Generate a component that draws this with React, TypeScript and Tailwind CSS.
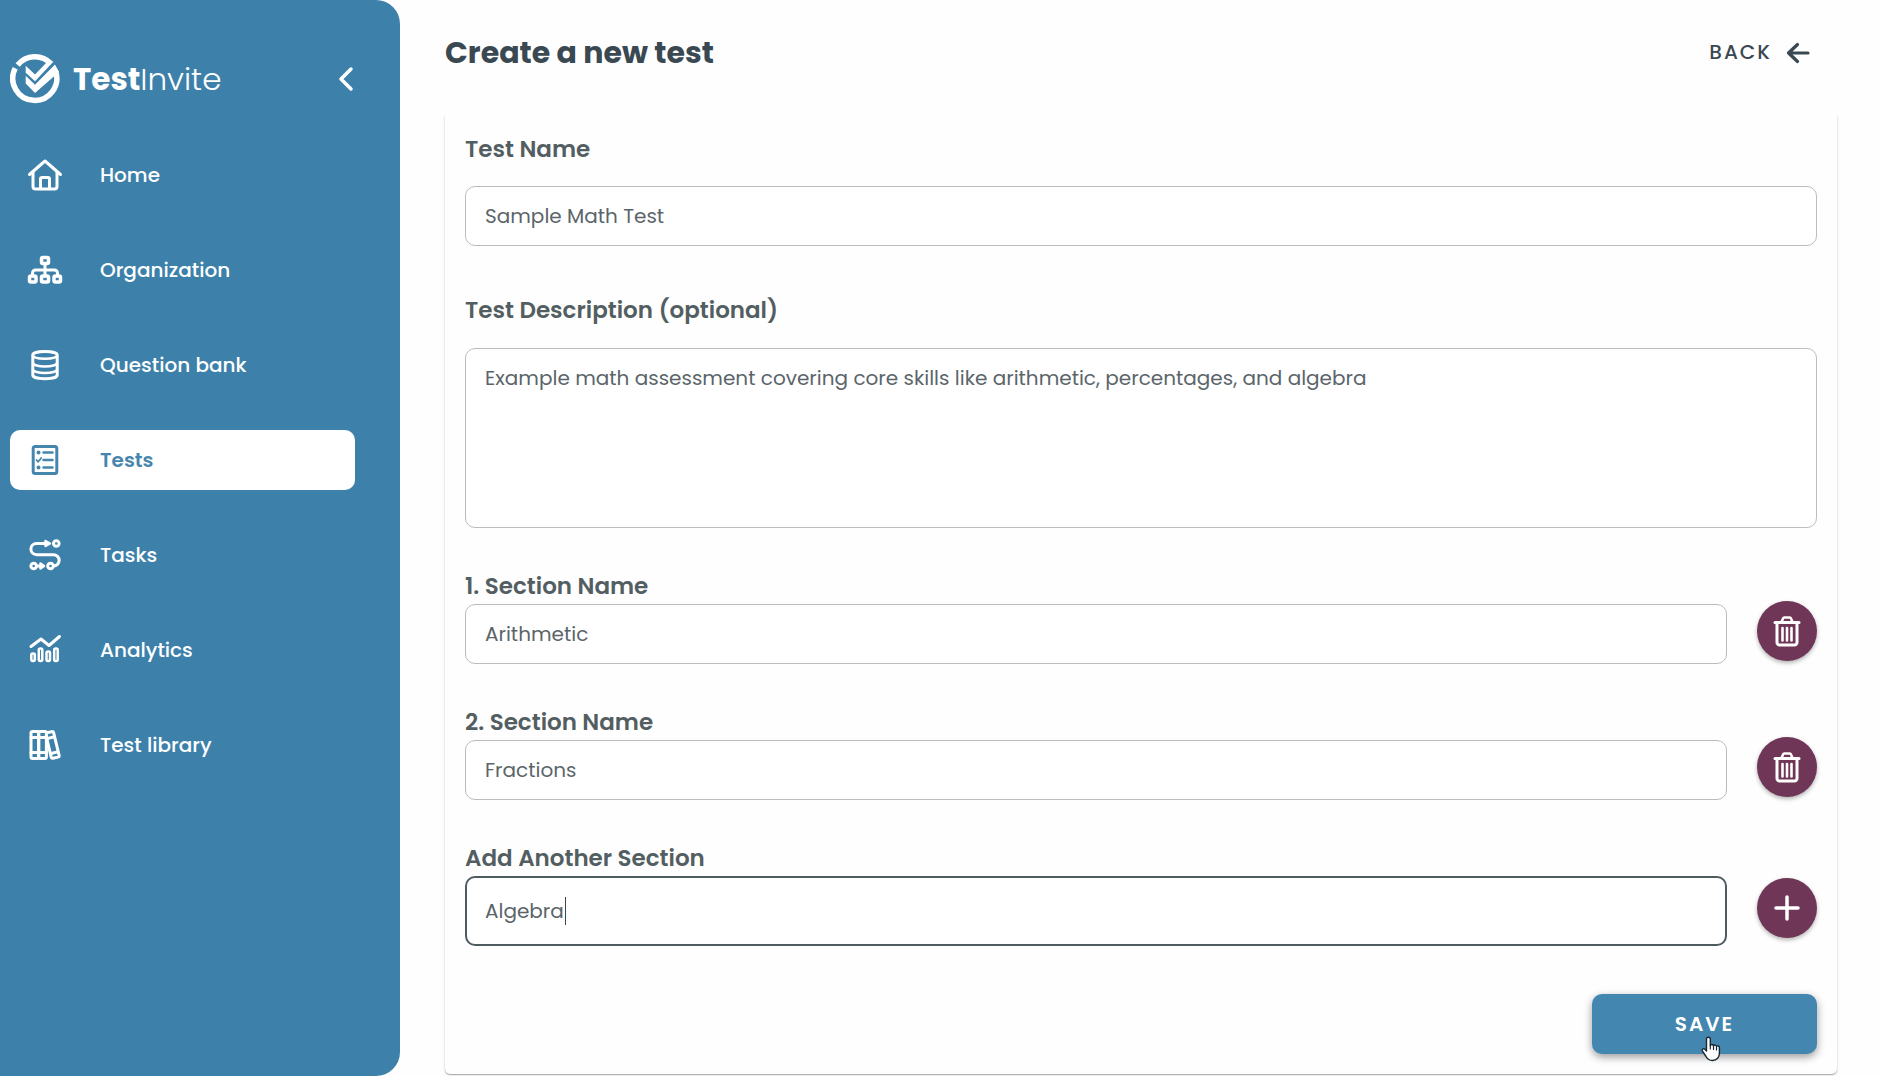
import React, { useState } from "react";

interface NavItem {
  id: string;
  title: string;
  icon: React.ReactNode;
}

interface IconProps {
  children: React.ReactNode;
}

const NavIcon: React.FC<IconProps> = ({ children }) => (
  <svg
    width="36"
    height="36"
    viewBox="0 0 36 36"
    fill="none"
    stroke="currentColor"
    strokeWidth="3"
    strokeLinecap="round"
    strokeLinejoin="round"
    aria-hidden="true"
  >
    {children}
  </svg>
);

const navItems: NavItem[] = [
  {
    id: "home",
    title: "Home",
    icon: (
      <NavIcon>
        <path d="M2.500 17.500 18 4l15.500 13.500" />
        <path d="M6 15v14.500a2.500 2.500 0 0 0 2.500 2.500h19a2.500 2.500 0 0 0 2.500-2.500V15" />
        <path d="M13.500 31.500V22a1.500 1.500 0 0 1 1.500-1.500h6a1.500 1.500 0 0 1 1.500 1.500v9.500" />
      </NavIcon>
    ),
  },
  {
    id: "organization",
    title: "Organization",
    icon: (
      <NavIcon>
        <g strokeWidth="3.500">
          <rect x="14.500" y="5.500" width="7" height="6" rx="1.500" />
          <rect x="2.500" y="24" width="6.500" height="6" rx="1.500" />
          <rect x="14.500" y="24" width="7" height="6" rx="1.500" />
          <rect x="27" y="24" width="6.500" height="6" rx="1.500" />
        </g>
        <path d="M18 11.500V24M5.500 24v-3a3 3 0 0 1 3-3h19a3 3 0 0 1 3 3v3" />
      </NavIcon>
    ),
  },
  {
    id: "bank",
    title: "Question bank",
    icon: (
      <NavIcon>
        <path d="M5.800 8c0-2 5-3.500 12.200-3.500S30.200 6 30.200 8v20c0 2-5 3.700-12.200 3.700S5.800 30 5.800 28z" />
        <path d="M6 8.500c0 2 5.400 3.200 12 3.200s12-1.200 12-3.200" strokeWidth="2.500" />
        <path d="M6 16c0 2 5.400 3.600 12 3.600s12-1.600 12-3.600M6 22.500c0 2 5.400 3.600 12 3.600s12-1.600 12-3.600" strokeWidth="2.500" />
      </NavIcon>
    ),
  },
  {
    id: "tests",
    title: "Tests",
    icon: (
      <NavIcon>
        <rect x="6.200" y="4.500" width="23.600" height="27" rx="2" />
        <path strokeWidth="2.500" d="M16.500 10.500h9M16.500 18h9M16.500 25.500h9" />
        <path strokeWidth="1.800" d="m9.500 18 1.700 1.800 3-3.800" />
        <circle cx="11.500" cy="10.500" r="2" fill="currentColor" stroke="none" />
        <circle cx="11.500" cy="25.500" r="2" fill="currentColor" stroke="none" />
      </NavIcon>
    ),
  },
  {
    id: "tasks",
    title: "Tasks",
    icon: (
      <NavIcon>
        <circle cx="29.300" cy="6.500" r="2.800" />
        <circle cx="6.700" cy="29" r="2.800" />
        <circle cx="23.500" cy="29" r="2.800" />
        <path d="M20 6.500H9.500a5.600 5.600 0 0 0 0 11.200h17a5.600 5.600 0 0 1 0 11.300M10 29h5" />
        <path strokeWidth="2.500" fill="currentColor" d="m18.500 4 4.500 2.500-4.500 2.500zM13.500 26.500l3.500 2.500-3.500 2.500z" />
      </NavIcon>
    ),
  },
  {
    id: "analytics",
    title: "Analytics",
    icon: (
      <NavIcon>
        <path d="m4 14.500 10-7.500 8 6.500L32.500 4.500" />
        <g strokeWidth="2.500">
          <rect x="4.300" y="21.500" width="3.500" height="7.500" rx="1.500" />
          <rect x="11.800" y="16.500" width="3.500" height="12.500" rx="1.500" />
          <rect x="19.500" y="19.500" width="3.500" height="9.500" rx="1.500" />
          <rect x="27.200" y="16.500" width="3.500" height="12.500" rx="1.500" />
        </g>
      </NavIcon>
    ),
  },
  {
    id: "library",
    title: "Test library",
    icon: (
      <NavIcon>
        <rect x="4" y="4.500" width="7.700" height="27" rx="1.500" />
        <rect x="11.700" y="4.500" width="7.700" height="27" rx="1.500" />
        <path d="M4 10.500h15.400M4 25.500h15.400" />
        <path d="m20 5.800 4.800-1.200a1.500 1.500 0 0 1 1.800 1.100l5.500 22.600a1.500 1.500 0 0 1-1.100 1.800L26 31.200a1.500 1.500 0 0 1-1.800-1.100L19.300 9.500" />
        <path d="m20.500 11.500 6.500-1.600M24 26.500l6.500-1.600" />
      </NavIcon>
    ),
  },
];

const Logo = () => (
  <svg width="50" height="52" viewBox="0 0 50 52" fill="none" aria-hidden="true">
    {/* broken ring */}
    <path d="M7.700 12A22 22 0 0 1 41 10.700" stroke="white" strokeWidth="5.500" />
    <path d="M5.200 15.300A22 22 0 1 0 45.300 17.500" stroke="white" strokeWidth="5.500" />
    {/* double tick */}
    <path d="M15.700 12.700 25 21.500 37 9 43.500 8.500 25 28.300 15.700 19.700z" fill="white" />
    <path d="M15.700 22.800 25 31.800 45 11.500 49 19 25 40 15.700 30.500z" fill="white" />
  </svg>
);

const TrashIcon = () => (
  <svg
    width="30"
    height="34"
    viewBox="0 0 30 34"
    fill="none"
    stroke="currentColor"
    strokeWidth="3"
    strokeLinecap="round"
    strokeLinejoin="round"
    aria-hidden="true"
  >
    <path d="M3 8.500h24" />
    <path strokeWidth="2.500" d="M9.500 8 11 4.500a1.500 1.500 0 0 1 1.400-1h5.200a1.500 1.500 0 0 1 1.400 1L20.500 8" />
    <path d="M5 9v19.500A2.500 2.500 0 0 0 7.500 31h15a2.500 2.500 0 0 0 2.500-2.500V9" />
    <path strokeWidth="2.600" d="M10.500 14v12.500M15 14v12.500M19.500 14v12.500" />
  </svg>
);

const PlusIcon = () => (
  <svg width="30" height="30" viewBox="0 0 30 30" stroke="currentColor" strokeWidth="3.500" strokeLinecap="round" aria-hidden="true">
    <path d="M15 4v22M4 15h22" />
  </svg>
);

const labelClass = "block text-[23px] leading-[30px] font-semibold text-[#535e62]";
const fieldClass =
  "block w-full rounded-[10px] border border-[#b9bdbf] bg-white px-[19px] text-xl font-normal text-[#5b6569] outline-none";
const roundButtonClass =
  "flex size-[60px] shrink-0 items-center justify-center rounded-full bg-[#703657] text-white shadow-[0_2px_4px_rgba(0,0,0,0.3)]";

const Sidebar = () => (
  <aside className="w-[400px] shrink-0 rounded-r-3xl bg-[#3d81ab] pt-[53px] pr-[45px] pl-[10px] text-white">
    <div className="flex items-center justify-between">
      <a href="#home" className="flex items-center gap-[13px]">
        <Logo />
        <span className="text-[31px] leading-[52px] font-light">
          <b className="font-bold">Test</b>Invite
        </span>
      </a>
      <button type="button" aria-label="Collapse menu" className="p-0">
        <svg width="18" height="26" viewBox="0 0 18 26" fill="none" stroke="currentColor" strokeWidth="3.500" strokeLinecap="round" strokeLinejoin="round">
          <path d="M14 3 4 13l10 10" />
        </svg>
      </button>
    </div>
    <nav className="mt-10 flex flex-col gap-[35px]">
      {navItems.map((item) => (
        <a
          key={item.id}
          href={`#${item.id}`}
          className={
            item.id === "tests"
              ? "flex h-[60px] items-center gap-[37px] rounded-[10px] bg-white pl-[17px] text-xl font-semibold text-[#4685ac]"
              : "flex h-[60px] items-center gap-[37px] pl-[17px] text-xl font-medium"
          }
        >
          {item.icon}
          {item.title}
        </a>
      ))}
    </nav>
  </aside>
);

const App: React.FC = () => {
  const [name, setName] = useState("Sample Math Test");
  const [description, setDescription] = useState(
    "Example math assessment covering core skills like arithmetic, percentages, and algebra"
  );
  const [sections, setSections] = useState(["Arithmetic", "Fractions"]);
  const [newSection, setNewSection] = useState("Algebra");

  const addSection = () => {
    if (!newSection) return;
    setSections([...sections, newSection]);
    setNewSection("");
  };

  return (
    <div className="flex min-h-screen bg-[#fefefe] font-[Poppins,Inter,sans-serif]">
      <Sidebar />
      <main className="flex-1">
        <header className="flex h-[115px] items-start justify-between pt-[30px] pr-[70px] pl-[45px] text-[#3a4852]">
          <h1 className="text-[30px] leading-[45px] font-bold">Create a new test</h1>
          <a href="#back" className="flex items-center gap-[14px] text-xl leading-[45px] font-medium tracking-widest">
            BACK
            <svg width="24" height="24" viewBox="0 0 24 24" fill="none" stroke="currentColor" strokeWidth="3.200" strokeLinecap="round" strokeLinejoin="round" aria-hidden="true">
              <path d="M22 12H2.500M11.500 3.500 2.500 12l9 8.500" />
            </svg>
          </a>
        </header>

        <div className="overflow-hidden pr-[43px] pb-[2px] pl-[45px]">
          <form
            className="rounded-b-[5px] px-5 pt-[19px] pb-5 shadow-[0_1px_3px_rgba(0,0,0,0.15),0_1px_1px_rgba(0,0,0,0.25)]"
            onSubmit={(e) => e.preventDefault()}
          >
            <label htmlFor="name" className={labelClass}>
              Test Name
            </label>
            <input
              id="name"
              className={`${fieldClass} mt-[22px] h-[60px]`}
              value={name}
              onChange={(e) => setName(e.target.value)}
            />

            <label htmlFor="description" className={`${labelClass} mt-[49px]`}>
              Test Description (optional)
            </label>
            <textarea
              id="description"
              className={`${fieldClass} mt-[23px] h-[180px] resize-none py-[14px] leading-[30px]`}
              value={description}
              onChange={(e) => setDescription(e.target.value)}
            />

            {sections.map((section, index) => (
              <div key={index} className="mt-[43px] flex items-end gap-[30px]">
                <div className="flex-1">
                  <label htmlFor={`section-${index}`} className={labelClass}>
                    {index + 1}. Section Name
                  </label>
                  <input
                    id={`section-${index}`}
                    className={`${fieldClass} mt-[3px] h-[60px]`}
                    value={section}
                    onChange={(e) =>
                      setSections(sections.map((s, i) => (i === index ? e.target.value : s)))
                    }
                  />
                </div>
                <button
                  type="button"
                  aria-label={`Delete section ${index + 1}`}
                  className={`${roundButtonClass} mb-[3px]`}
                  onClick={() => setSections(sections.filter((_, i) => i !== index))}
                >
                  <TrashIcon />
                </button>
              </div>
            ))}

            <div className="mt-[43px] flex items-end gap-[30px]">
              <div className="flex-1">
                <label htmlFor="new-section" className={labelClass}>
                  Add Another Section
                </label>
                <div className="relative mt-[3px]">
                  <input
                    id="new-section"
                    className="block h-[70px] w-full rounded-[10px] border-2 border-[#4f5b5f] bg-white px-[18px] text-xl font-normal text-[#5b6569] outline-none"
                    value={newSection}
                    onChange={(e) => setNewSection(e.target.value)}
                  />
                  {newSection === "Algebra" && (
                    <span className="absolute top-[21px] left-[100px] h-7 w-px bg-[#3a4852]" />
                  )}
                </div>
              </div>
              <button type="button" aria-label="Add section" className={`${roundButtonClass} mb-2`} onClick={addSection}>
                <PlusIcon />
              </button>
            </div>

            <div className="mt-12 flex justify-end">
              <button
                type="submit"
                className="relative h-[60px] w-[225px] cursor-pointer rounded-[10px] bg-[#4387b0] text-xl font-semibold tracking-widest text-white shadow-[0_3px_8px_rgba(0,0,0,0.4)]"
              >
                SAVE
                <svg className="absolute top-[42px] left-[109px]" width="20" height="26" viewBox="0 0 20 26" aria-hidden="true">
                  <path
                    d="M5.500 15V3.200a1.900 1.900 0 0 1 3.800 0V9.500c.3-1.400 3-1.300 3.200.3.500-1.200 2.900-.9 3 .7.600-1 2.900-.7 2.900 1.200v5.800c0 3.500-2.400 7-7 7-3.400 0-5-1.500-6.400-4L1.500 15.200c-1-1.900 1-3.200 2.400-1.900z"
                    fill="white"
                    stroke="#1b2730"
                    strokeWidth="1.400"
                    strokeLinejoin="round"
                  />
                  <path d="M9.300 9v4M12.500 10v3.500M15.500 11v3" stroke="#1b2730" strokeWidth="1.200" strokeLinecap="round" />
                </svg>
              </button>
            </div>
          </form>
        </div>
      </main>
    </div>
  );
};

export default App;
